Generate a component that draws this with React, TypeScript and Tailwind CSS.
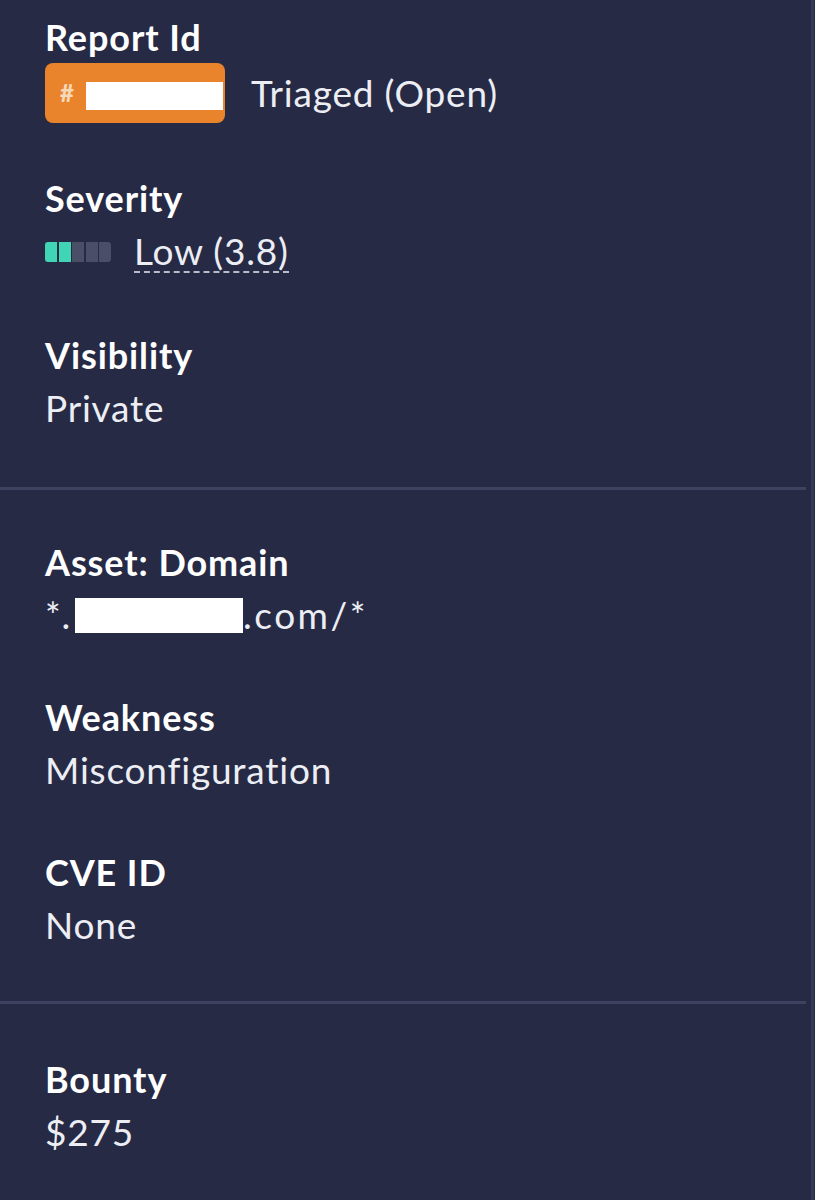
import React from "react";

const font = { fontFamily: "Lato, 'Noto Sans', sans-serif" };

function Label({ children }: { children: React.ReactNode }) {
  return (
    <div className="text-[36px] font-bold leading-[40px] text-white tracking-[0.9px]">
      {children}
    </div>
  );
}

function Value({ children }: { children: React.ReactNode }) {
  return (
    <div className="text-[37px] font-normal leading-[40px] text-[#eceef4] tracking-[0.8px]">
      {children}
    </div>
  );
}

function Field({ label, children }: { label: string; children: React.ReactNode }) {
  return (
    <div className="flex flex-col gap-[13px]">
      <Label>{label}</Label>
      {children}
    </div>
  );
}

function SeverityBar() {
  const segs = [true, true, false, false, false];
  return (
    <div className="flex gap-[1.5px]">
      {segs.map((on, i) => (
        <div
          key={i}
          className={`h-[20px] w-[12px] ${on ? "bg-[#3fd5b5]" : "bg-[#4a4e66]"} ${
            i === 0 ? "rounded-l-[3px]" : ""
          } ${i === 4 ? "rounded-r-[3px]" : ""}`}
        />
      ))}
    </div>
  );
}

export default function App() {
  return (
    <div className="min-h-[1200px] w-[815px] bg-[#262a45] flex" style={font}>
      <div className="w-[806px] flex flex-col">
        {/* Section 1 */}
        <div className="pl-[45px] pt-[17px] pb-[59px] flex flex-col">
          <div className="flex flex-col gap-[6px]">
            <Label>Report Id</Label>
            <div className="flex items-center gap-[26px]">
              <div className="relative h-[60px] w-[180px] rounded-[8px] bg-[#e9832c] flex items-center">
                <span className="ml-[15px] text-[24px] font-black text-[#f6d7b8]">#</span>
                <div className="absolute left-[41px] top-[19px] h-[28px] w-[137px] bg-white" />
              </div>
              <Value>Triaged (Open)</Value>
            </div>
          </div>
          <div className="mt-[55px]">
            <Field label="Severity">
              <div className="flex items-center gap-[23px]">
                <SeverityBar />
                <span className="text-[37px] leading-[40px] text-[#eceef4] border-b-2 border-dashed border-[#b9bccb] tracking-[0.8px]">
                  Low (3.8)
                </span>
              </div>
            </Field>
          </div>
          <div className="mt-[62px]">
            <Field label="Visibility">
              <Value>Private</Value>
            </Field>
          </div>
        </div>
        <div className="h-[3px] bg-[#3d4260]" />
        {/* Section 2 */}
        <div className="pl-[45px] pt-[52px] pb-[56px] flex flex-col gap-[62px]">
          <Field label="Asset: Domain">
            <div className="flex items-center text-[37px] leading-[40px] text-[#eceef4] tracking-[0.8px]">
              <span>*.</span>
              <div className="h-[35px] w-[168px] bg-white ml-[4px]" />
              <span className="tracking-[2.5px]">.com/*</span>
            </div>
          </Field>
          <Field label="Weakness">
            <Value>Misconfiguration</Value>
          </Field>
          <Field label="CVE ID">
            <Value>None</Value>
          </Field>
        </div>
        <div className="h-[3px] bg-[#3d4260]" />
        {/* Section 3 */}
        <div className="pl-[45px] pt-[55px] pb-[40px] flex flex-col gap-[62px]">
          <Field label="Bounty">
            <Value>$275</Value>
          </Field>
        </div>
      </div>
      <div className="w-[5px]" />
      <div className="w-[3px] bg-[#353a58]" />
    </div>
  );
}
